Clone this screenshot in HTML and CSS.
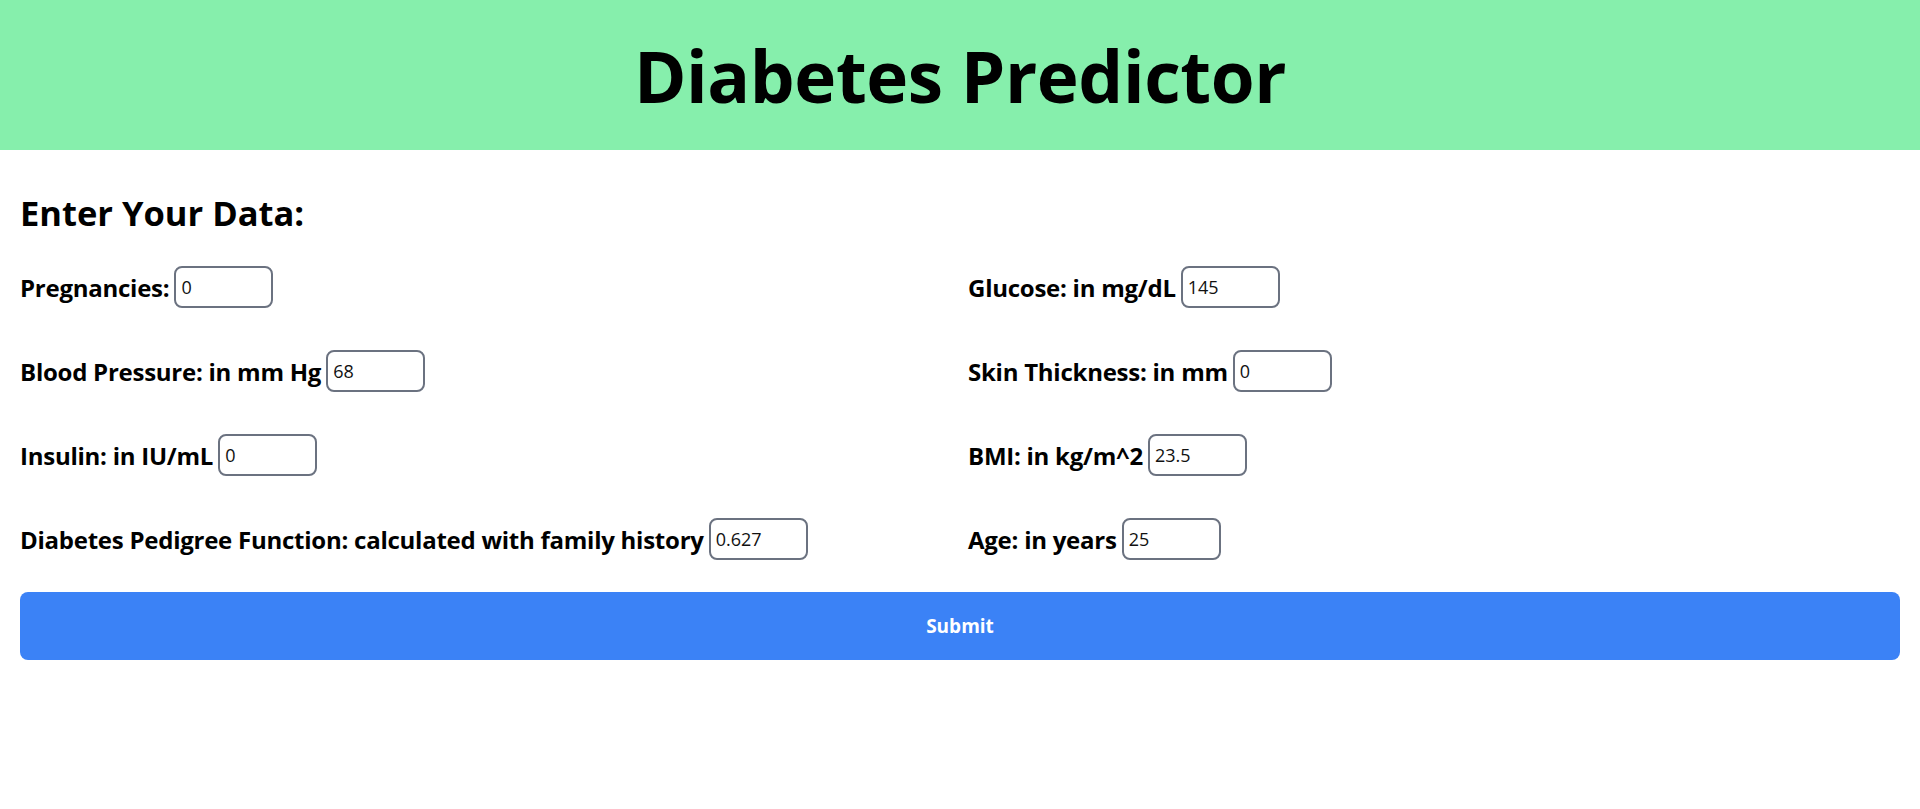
FILE: index.html
```html
<!DOCTYPE html>
<html lang="en">
<head>
<meta charset="utf-8">
<title>Diabetes Predictor</title>
<link rel="stylesheet" href="styles.css">
</head>
<body>
<header class="hero">
  <h1 class="hero-title">Diabetes Predictor</h1>
</header>
<main class="content">
  <h2 class="section-title">Enter Your Data:</h2>
  <form class="data-form">
    <div class="fields">
      <label class="field"><span class="field-label">Pregnancies:</span><input class="field-input" type="text" value="0"></label>
      <label class="field"><span class="field-label">Glucose: in mg/dL</span><input class="field-input" type="text" value="145"></label>
      <label class="field"><span class="field-label">Blood Pressure: in mm Hg</span><input class="field-input" type="text" value="68"></label>
      <label class="field"><span class="field-label">Skin Thickness: in mm</span><input class="field-input" type="text" value="0"></label>
      <label class="field"><span class="field-label">Insulin: in IU/mL</span><input class="field-input" type="text" value="0"></label>
      <label class="field"><span class="field-label">BMI: in kg/m^2</span><input class="field-input" type="text" value="23.5"></label>
      <label class="field"><span class="field-label">Diabetes Pedigree Function: calculated with family history</span><input class="field-input" type="text" value="0.627"></label>
      <label class="field"><span class="field-label">Age: in years</span><input class="field-input" type="text" value="25"></label>
    </div>
    <button class="submit-btn" type="button">Submit</button>
  </form>
</main>
</body>
</html>
```
FILE: styles.css
```css
* { box-sizing: border-box; }

body {
  margin: 0;
  font-family: "Open Sans", "Noto Sans", sans-serif;
  color: #000;
  background: #fff;
}

.hero {
  height: 150px;
  background: #86efac;
  display: flex;
  align-items: center;
  justify-content: center;
}

.hero-title {
  margin: 0;
  font-size: 71px;
  line-height: 1;
  font-weight: 700;
  letter-spacing: -0.4px;
}

.content {
  padding: 43px 20px 0;
}

.section-title {
  margin: 0;
  font-size: 34.5px;
  line-height: 40px;
  font-weight: 700;
}

.data-form {
  margin-top: 33px;
}

.fields {
  display: grid;
  grid-template-columns: 1fr 1fr;
  column-gap: 16px;
  row-gap: 42px;
}

.field {
  display: flex;
  align-items: center;
  gap: 5px;
}

.field-label {
  font-size: 24px;
  font-weight: 700;
  letter-spacing: -0.25px;
}

.field-input {
  width: 99px;
  height: 42px;
  border: 2px solid #6b7280;
  border-radius: 8px;
  padding: 0 5px;
  font-family: "Open Sans", "Noto Sans", sans-serif;
  font-size: 18px;
  color: #111;
  background: #fff;
}

.submit-btn {
  display: block;
  width: 100%;
  height: 68px;
  margin-top: 32px;
  border: none;
  border-radius: 8px;
  background: #3b82f6;
  color: #fff;
  font-family: "Open Sans", "Noto Sans", sans-serif;
  font-size: 19px;
  font-weight: 700;
}
```
